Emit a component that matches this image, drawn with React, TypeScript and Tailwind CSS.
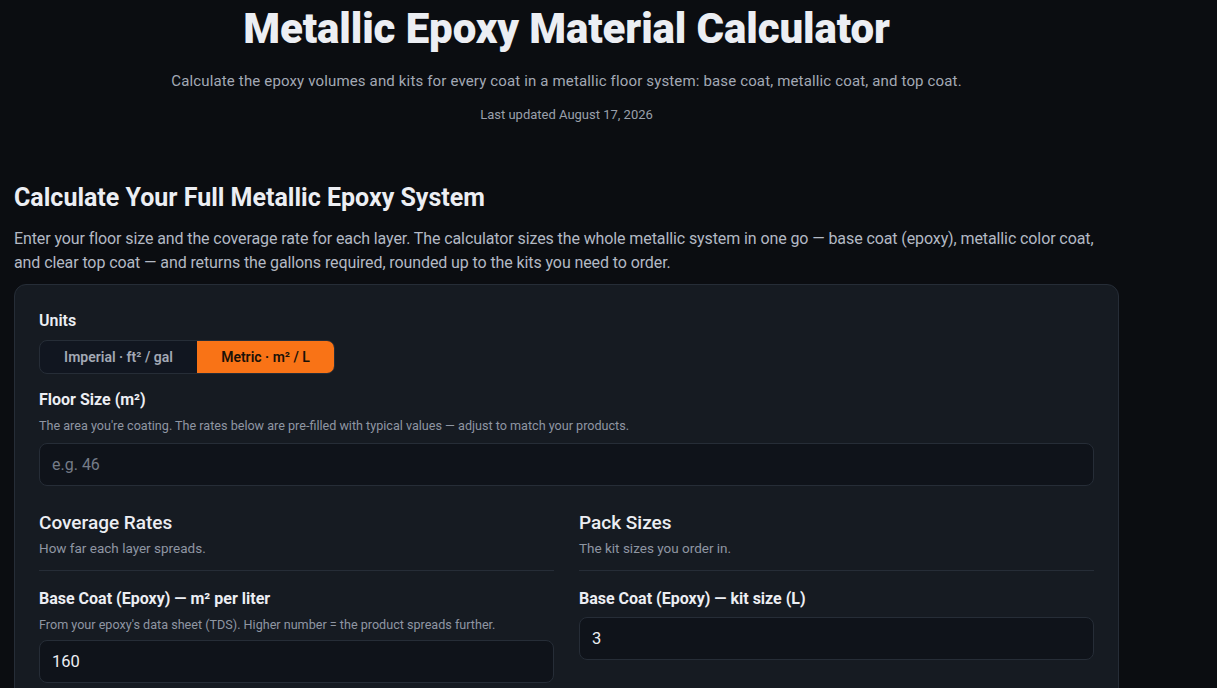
import React, { useState } from 'react';

const font = { fontFamily: 'Roboto, "Liberation Sans", sans-serif' };

export default function App() {
  const [units, setUnits] = useState<'imperial' | 'metric'>('metric');
  const [area, setArea] = useState('');
  const [baseRate, setBaseRate] = useState('160');
  const [baseKit, setBaseKit] = useState('3');

  return (
    <div className="min-h-screen bg-[#0b0d11] text-[#e6e9ef]" style={font}>
      <div className="w-[1105px] ml-[14px]">
        {/* header */}
        <header className="text-center pt-[6px]">
          <h1 className="text-[42px] leading-[46px] font-black tracking-[-0.1px] text-[#eceef3]">
            Metallic Epoxy Material Calculator
          </h1>
          <p className="mt-[18px] text-[15px] leading-[22px] tracking-[0.15px] text-[#a3a9b5]">
            Calculate the epoxy volumes and kits for every coat in a metallic floor system: base coat, metallic coat, and top coat.
          </p>
          <p className="mt-[14px] text-[13px] leading-[18px] text-[#9aa0ab]">Last updated August 17, 2026</p>
        </header>

        {/* section */}
        <section className="mt-[59px]">
          <h2 className="text-[25px] leading-[30px] font-bold text-[#eceef3]">
            Calculate Your Full Metallic Epoxy System
          </h2>
          <p className="mt-[14px] text-[16px] leading-[24px] tracking-[-0.1px] text-[#b3b9c4]">
            Enter your floor size and the coverage rate for each layer. The calculator sizes the whole metallic system in one go — base coat (epoxy), metallic color coat, and clear top coat — and returns the gallons required, rounded up to the kits you need to order.
          </p>

          <div className="mt-[9px] bg-[#161b22] border border-[#262d37] rounded-[12px] px-[24px] pt-[26px] pb-[24px]">
            <div className="text-[16px] leading-[20px] font-semibold text-[#eceef3]">Units</div>
            <div className="mt-[9px] inline-flex rounded-[8px] border border-[#262d37] bg-[#111620] overflow-hidden">
              <button
                onClick={() => setUnits('imperial')}
                className={`w-[157px] h-[32px] text-[14px] font-semibold ${units === 'imperial' ? 'bg-[#f97316] text-[#1a1108]' : 'text-[#a3a9b5]'}`}
              >
                Imperial · ft² / gal
              </button>
              <button
                onClick={() => setUnits('metric')}
                className={`w-[137px] h-[32px] text-[14px] font-semibold ${units === 'metric' ? 'bg-[#f97316] text-[#1a1108]' : 'text-[#a3a9b5]'}`}
              >
                Metric · m² / L
              </button>
            </div>

            <div className="mt-[16px] text-[16px] leading-[20px] font-bold text-[#eceef3]">Floor Size (m²)</div>
            <p className="mt-[8px] text-[12.6px] leading-[16px] text-[#8f96a2]">
              The area you're coating. The rates below are pre-filled with typical values — adjust to match your products.
            </p>
            <input
              value={area}
              onChange={(e) => setArea(e.target.value)}
              placeholder="e.g. 46"
              className="mt-[9px] w-full h-[43px] px-[12px] rounded-[8px] bg-[#0f131a] border border-[#262d37] text-[16px] text-[#e6e9ef] placeholder:text-[#757c88] outline-none"
            />

            <div className="mt-[25px] grid grid-cols-2 gap-[25px]">
              <div>
                <h3 className="text-[19px] leading-[24px] font-medium text-[#eceef3]">Coverage Rates</h3>
                <p className="mt-[4px] text-[13.5px] leading-[18px] text-[#8f96a2]">How far each layer spreads.</p>
                <div className="mt-[13px] border-t border-[#262d37]" />
                <div className="mt-[18px] text-[16px] leading-[20px] font-bold text-[#eceef3]">
                  Base Coat (Epoxy) — m² per liter
                </div>
                <p className="mt-[8px] text-[12.6px] leading-[16px] text-[#8f96a2]">
                  From your epoxy's data sheet (TDS). Higher number = the product spreads further.
                </p>
                <input
                  value={baseRate}
                  onChange={(e) => setBaseRate(e.target.value)}
                  className="mt-[7px] w-full h-[43px] px-[12px] rounded-[8px] bg-[#0f131a] border border-[#262d37] text-[16.5px] text-[#eceef3] outline-none"
                />
              </div>
              <div>
                <h3 className="text-[19px] leading-[24px] font-medium text-[#eceef3]">Pack Sizes</h3>
                <p className="mt-[4px] text-[13.5px] leading-[18px] text-[#8f96a2]">The kit sizes you order in.</p>
                <div className="mt-[13px] border-t border-[#262d37]" />
                <div className="mt-[18px] text-[16px] leading-[20px] font-bold text-[#eceef3]">
                  Base Coat (Epoxy) — kit size (L)
                </div>
                <input
                  value={baseKit}
                  onChange={(e) => setBaseKit(e.target.value)}
                  className="mt-[8px] w-full h-[43px] px-[12px] rounded-[8px] bg-[#0f131a] border border-[#262d37] text-[16.5px] text-[#eceef3] outline-none"
                />
              </div>
            </div>
          </div>
        </section>
      </div>
    </div>
  );
}
